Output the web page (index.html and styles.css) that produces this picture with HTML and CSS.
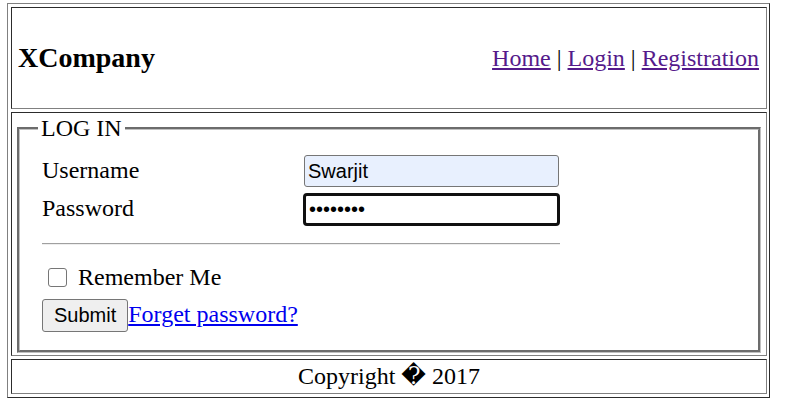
FILE: index.html
```html
<!DOCTYPE html>
<html>
<head>
<meta charset="utf-8">
<title>XCompany - Log In</title>
<link rel="stylesheet" href="styles.css">
</head>
<body>
<div class="page">
  <header class="cell head">
    <h3 class="brand">XCompany</h3>
    <nav class="nav"><a href="#" class="nav-link">Home</a> | <a href="#" class="nav-link">Login</a> | <a href="#" class="nav-link">Registration</a></nav>
  </header>
  <main class="cell body">
    <fieldset class="login">
      <legend class="login-title">LOG IN</legend>
      <div class="form">
        <div class="row"><label class="row-label">Username</label><input class="field auto" type="text" value="Swarjit"></div>
        <div class="row row-pass"><label class="row-label">Password</label><input class="field pwd" type="password" value="swarjit1"></div>
        <div class="rule"></div>
        <div class="remember"><span class="check"></span><span>Remember Me</span></div>
        <div class="actions"><button class="btn" type="button">Submit</button><a href="#" class="forgot">Forget password?</a></div>
      </div>
    </fieldset>
  </main>
  <footer class="cell foot">Copyright &#xFFFD; 2017</footer>
</div>
</body>
</html>
```
FILE: styles.css
```css
html, body {
  margin: 0;
}
body {
  padding: 3px 0 0 7px;
  background: #fff;
  color: #000;
  font-family: "Liberation Serif", "Times New Roman", "DejaVu Serif", serif;
  font-size: 24px;
}
.page {
  width: 763px;
  box-sizing: border-box;
  border: 1px solid;
  border-color: #808080 #2c2c2c #2c2c2c #808080;
  padding: 3px 2px 3px 3px;
  display: flex;
  flex-direction: column;
  gap: 3px;
}
.cell {
  border: 1px solid;
  border-color: #2c2c2c #808080 #808080 #2c2c2c;
}
.head {
  height: 102px;
  box-sizing: border-box;
  display: flex;
  align-items: center;
  justify-content: space-between;
  padding: 0 7px 0 6px;
}
.brand {
  margin: 0;
  font-size: 28px;
  font-weight: bold;
}
.nav-link {
  color: #551a8b;
}
.body {
  padding: 1px 2px 2px;
}
.login {
  margin: 0 3px;
  padding: 0 18px 18px;
  border: 3px groove #c0c0c0;
  min-width: 0;
}
.login-title {
  padding: 0 3px;
  line-height: 28px;
}
.form {
  margin: 13px 0 0 4px;
  width: 518px;
}
.row {
  display: flex;
  align-items: center;
}
.row-label {
  width: 262px;
  flex: none;
  padding-bottom: 2px;
}
.row-pass {
  margin-top: 6px;
}
.field {
  font-family: "Liberation Sans", Arial, sans-serif;
  font-size: 20px;
  color: #000;
  width: 255px;
  height: 32px;
  box-sizing: border-box;
  margin: 0;
  padding: 0 3px;
  border: 1px solid #767676;
  border-radius: 3px;
  outline: none;
}
.auto {
  background: #e8f0fe;
}
.pwd {
  width: 257px;
  height: 33px;
  margin-left: -1px;
  border: 3px solid #101010;
  border-radius: 4px;
  background: #fff;
}
.rule {
  margin-top: 17px;
  height: 1px;
  background: #a0a0a0;
  border-bottom: 1px solid #eeeeee;
}
.remember {
  display: flex;
  align-items: center;
  height: 28px;
  margin-top: 18px;
}
.check {
  width: 19px;
  height: 19px;
  box-sizing: border-box;
  border: 1px solid #767676;
  border-radius: 3px;
  background: #fff;
  margin: 0 11px 0 6px;
}
.actions {
  display: flex;
  align-items: baseline;
  margin-top: 8px;
}
.btn {
  font-family: "Liberation Sans", Arial, sans-serif;
  font-size: 20px;
  color: #000;
  height: 33px;
  margin: 0;
  padding: 0 11px;
  border: 1px solid #767676;
  border-radius: 3px;
  background: #efefef;
}
.forgot {
  color: #0000ee;
}
.foot {
  text-align: center;
  line-height: 29px;
  padding: 2px;
}
```
